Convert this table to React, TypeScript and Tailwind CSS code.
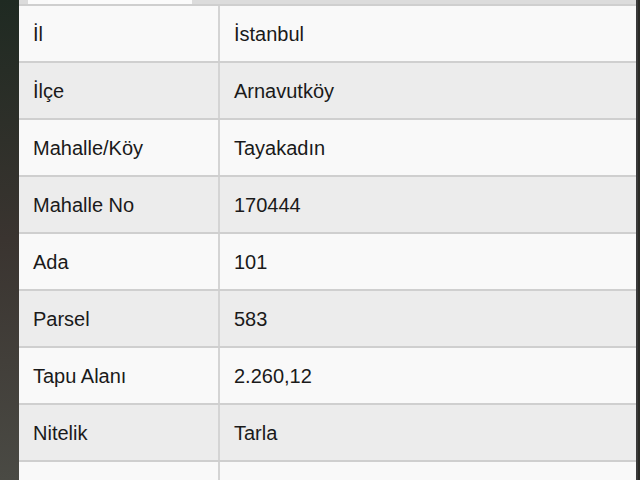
const ROWS: [string, string][] = [
  ["İl", "İstanbul"],
  ["İlçe", "Arnavutköy"],
  ["Mahalle/Köy", "Tayakadın"],
  ["Mahalle No", "170444"],
  ["Ada", "101"],
  ["Parsel", "583"],
  ["Tapu Alanı", "2.260,12"],
  ["Nitelik", "Tarla"],
  ["Kimden", "Sahibinden Ömer"],
];

export default function App() {
  return (
    <div
      className="flex h-[480px] w-[640px] overflow-hidden bg-[#2a2a26]"
      style={{ fontFamily: "'Liberation Sans', Arial, sans-serif" }}
    >
      {/* photo edge */}
      <div className="w-[19px] shrink-0 bg-gradient-to-b from-[#1f2a22] via-[#3a3430] to-[#4a4a44]" />

      <div className="flex w-[619px] shrink-0 flex-col border-r-2 border-[#3a3a3a] bg-[#f8f8f8]">
        {/* tab strip */}
        <div className="flex h-[4px] shrink-0 bg-[#dcdcdc]">
          <div className="ml-[9px] w-[164px] bg-[#fbfbfb]" />
        </div>

        {ROWS.map(([label, value], i) => (
          <div
            key={label}
            className={`flex h-[57px] shrink-0 border-t-2 border-[#cfcfcf] text-[20px] text-[#1a1a1a] ${
              i % 2 === 1 ? "bg-[#ececec]" : "bg-[#f9f9f9]"
            }`}
          >
            <div className="flex w-[201px] shrink-0 items-center border-r-2 border-[#d4d4d4] pl-[14px]">
              {label}
            </div>
            <div className="flex flex-1 items-center pl-[14px]">{value}</div>
          </div>
        ))}
      </div>
    </div>
  );
}
